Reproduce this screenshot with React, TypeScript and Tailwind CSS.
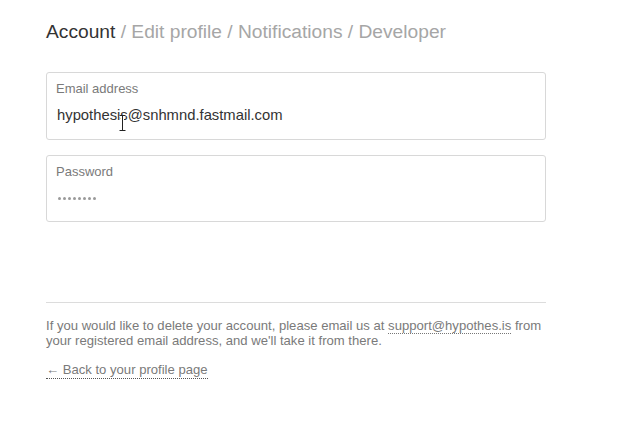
export default function App() {
  return (
    <div className="min-h-screen bg-white font-['Liberation_Sans',Arial,sans-serif] text-[#333] pl-[46px] pt-[21px]">
      <div className="w-[500px]">
        <h1 className="text-[19.2px] leading-[22px]">
          <span className="text-[#333]">Account</span>
          <span className="text-[#a6a6a6]"> / Edit profile / Notifications / Developer</span>
        </h1>

        <div className="mt-[29px] flex flex-col gap-[15px]">
          <div className="relative h-[68px] rounded-[3px] border border-[#d8d8d8] px-[9px] pt-[8px]">
            <div className="text-[13px] leading-[15px] text-[#7a7a7a]">Email address</div>
            <div className="mt-[10px] pl-px text-[14.8px] leading-[18px] text-[#333]">hypothesis@snhmnd.fastmail.com</div>
            <svg className="absolute left-[72px] top-[42px]" width="7" height="16" viewBox="0 0 7 16">
              <path d="M0.5 0.5h6M3.5 0.5v15M0.5 15.5h6" stroke="#fff" strokeWidth="3" fill="none" />
              <path d="M0.5 0.5h6M3.5 0.5v15M0.5 15.5h6" stroke="#222" strokeWidth="1" fill="none" />
            </svg>
          </div>
          <div className="h-[67px] rounded-[3px] border border-[#d8d8d8] px-[9px] pt-[8px]">
            <div className="text-[13px] leading-[15px] text-[#7a7a7a]">Password</div>
            <div className="mt-[18px] flex gap-[2px] pl-[2px]">
              {Array.from({ length: 8 }).map((_, i) => (
                <span key={i} className="h-[3px] w-[3px] rounded-full bg-[#9a9a9a]"></span>
              ))}
            </div>
          </div>
        </div>

        <div className="mt-[80px] border-t border-[#dcdcdc]"></div>

        <p className="mt-[15px] text-[13.1px] leading-[15px] text-[#7a7a7a]">
          If you would like to delete your account, please email us at{" "}
          <a className="border-b border-dotted border-[#777] text-[#7a7a7a]">support@hypothes.is</a> from your
          registered email address, and we'll take it from there.
        </p>

        <p className="mt-[14px] text-[13.1px] leading-[15px] text-[#7a7a7a]">
          <a className="border-b border-dotted border-[#555] pb-px">← Back to your profile page</a>
        </p>
      </div>
    </div>
  );
}
